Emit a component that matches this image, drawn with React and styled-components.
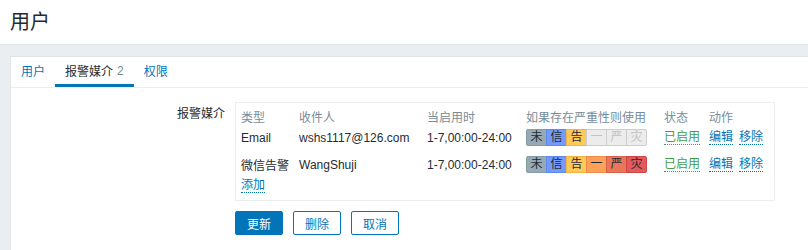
import React from "react";
import styled, { createGlobalStyle } from "styled-components";

const GlobalStyle = createGlobalStyle`
  html, body {
    margin: 0;
    padding: 0;
    background: #ebeef0;
    overflow: hidden;
  }
  body {
    font-family: "Liberation Sans", Arial, "Noto Sans CJK SC", sans-serif;
    font-size: 12px;
    color: #1f2c33;
  }
`;

const Header = styled.header`
  height: 44px;
  background: #fff;
  border-bottom: 1px solid #dfe4e7;
  padding-left: 10px;
  display: flex;
  align-items: center;
`;

const Title = styled.h1`
  margin: 0;
  font-size: 20px;
  font-weight: normal;
  line-height: 24px;
  color: #1f2c33;
`;

const Panel = styled.div`
  box-sizing: border-box;
  margin: 11px 0 0 10px;
  background: #fff;
  border: 1px solid #dfe4e7;
  border-right: none;
  border-bottom: none;
  height: calc(100vh - 56px);
`;

const TabBar = styled.nav`
  display: flex;
  height: 30px;
  border-bottom: 1px solid #ebeef0;
`;

const Tab = styled.a`
  display: flex;
  align-items: center;
  box-sizing: border-box;
  height: 30px;
  padding: 0 10px;
  border-bottom: 3px solid ${(p) => (p.$active ? "#0275b8" : "transparent")};
  color: ${(p) => (p.$active ? "#1f2c33" : "#0275b8")};
  cursor: pointer;
`;

const Count = styled.span`
  color: #768d99;
  margin-left: 4px;
`;

const Form = styled.div`
  padding-top: 14px;
`;

const FormRow = styled.div`
  display: grid;
  grid-template-columns: 214px 540px;
  column-gap: 10px;
  margin-bottom: ${(p) => p.$gap || 0}px;
`;

const Label = styled.div`
  text-align: right;
  padding-top: 5px;
  line-height: 14px;
`;

const MediaBox = styled.div`
  box-sizing: border-box;
  border: 1px solid #ebeef0;
  padding: 5px 5px 7px 5px;
`;

const Row = styled.div`
  display: grid;
  grid-template-columns: 58px 128px 99px 138px 45px auto;
  align-items: center;
  height: ${(p) => p.$h}px;
  color: ${(p) => (p.$head ? "#768d99" : "#1f2c33")};
`;

const Cell = styled.div`
  white-space: nowrap;
  display: flex;
  align-items: center;
  gap: 6px;
`;

const Severity = styled.div`
  display: flex;
`;

const SevCell = styled.span`
  box-sizing: border-box;
  width: 21px;
  height: 17px;
  line-height: 15px;
  text-align: center;
  border: 1px solid ${(p) => p.$border};
  background: ${(p) => p.$bg};
  color: ${(p) => p.$color};
  & + & {
    margin-left: -1px;
  }
  &:first-child {
    border-radius: 2px 0 0 2px;
  }
  &:last-child {
    border-radius: 0 2px 2px 0;
  }
`;

const Link = styled.a`
  display: inline-block;
  line-height: 13px;
  color: ${(p) => p.$color || "#0275b8"};
  border-bottom: 1px dotted ${(p) => p.$color || "#0275b8"};
  cursor: pointer;
`;

const Buttons = styled.div`
  display: flex;
  gap: 10px;
`;

const Button = styled.button`
  box-sizing: border-box;
  height: 24px;
  padding: 0 11px;
  border-radius: 2px;
  font-family: inherit;
  font-size: 12px;
  border: 1px solid #0275b8;
  background: ${(p) => (p.$alt ? "#fff" : "#0275b8")};
  color: ${(p) => (p.$alt ? "#0275b8" : "#fff")};
  cursor: pointer;
`;

const LEVELS = [
  { t: "未", bg: "#97aab3", border: "#859ba6" },
  { t: "信", bg: "#7499ff", border: "#5e88f5" },
  { t: "告", bg: "#ffc859", border: "#f0b444" },
  { t: "一", bg: "#ffa059", border: "#ef8c45" },
  { t: "严", bg: "#e97659", border: "#d9624a" },
  { t: "灾", bg: "#e45959", border: "#d04545" },
];

const SeverityBar = ({ enabled }) => (
  <Severity>
    {LEVELS.map((l, i) =>
      enabled[i] ? (
        <SevCell key={l.t} $bg={l.bg} $border={l.border} $color="#1f2c33">
          {l.t}
        </SevCell>
      ) : (
        <SevCell key={l.t} $bg="#ececec" $border="#cdcdcd" $color="#c2c2c2">
          {l.t}
        </SevCell>
      )
    )}
  </Severity>
);

const media = [
  { type: "Email", to: "wshs1117@126.com", when: "1-7,00:00-24:00", sev: [1, 1, 1, 0, 0, 0] },
  { type: "微信告警", to: "WangShuji", when: "1-7,00:00-24:00", sev: [1, 1, 1, 1, 1, 1] },
];

export default function App() {
  return (
    <>
      <GlobalStyle />
      <Header>
        <Title>用户</Title>
      </Header>
      <Panel>
        <TabBar>
          <Tab>用户</Tab>
          <Tab $active>
            报警媒介<Count>2</Count>
          </Tab>
          <Tab>权限</Tab>
        </TabBar>
        <Form>
          <FormRow $gap={10}>
            <Label>报警媒介</Label>
            <MediaBox>
              <Row $head $h={16}>
                <Cell>类型</Cell>
                <Cell>收件人</Cell>
                <Cell>当启用时</Cell>
                <Cell>如果存在严重性则使用</Cell>
                <Cell>状态</Cell>
                <Cell>动作</Cell>
              </Row>
              {media.map((m) => (
                <Row key={m.type} $h={27}>
                  <Cell>{m.type}</Cell>
                  <Cell>{m.to}</Cell>
                  <Cell>{m.when}</Cell>
                  <Cell>
                    <SeverityBar enabled={m.sev} />
                  </Cell>
                  <Cell>
                    <Link $color="#429e47">已启用</Link>
                  </Cell>
                  <Cell>
                    <Link>编辑</Link>
                    <Link>移除</Link>
                  </Cell>
                </Row>
              ))}
              <Row $h={15}>
                <Cell>
                  <Link>添加</Link>
                </Cell>
              </Row>
            </MediaBox>
          </FormRow>
          <FormRow>
            <div />
            <Buttons>
              <Button>更新</Button>
              <Button $alt>删除</Button>
              <Button $alt>取消</Button>
            </Buttons>
          </FormRow>
        </Form>
      </Panel>
    </>
  );
}
